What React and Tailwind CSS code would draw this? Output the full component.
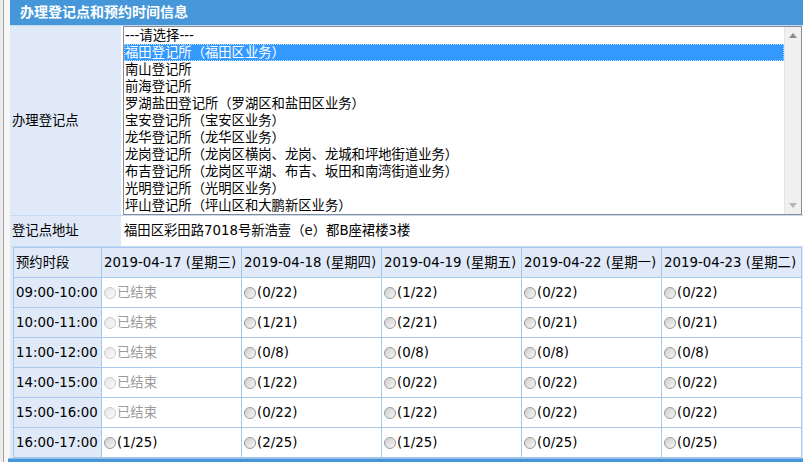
const options = [
  "---请选择---",
  "福田登记所（福田区业务）",
  "南山登记所",
  "前海登记所",
  "罗湖盐田登记所（罗湖区和盐田区业务）",
  "宝安登记所（宝安区业务）",
  "龙华登记所（龙华区业务）",
  "龙岗登记所（龙岗区横岗、龙岗、龙城和坪地街道业务）",
  "布吉登记所（龙岗区平湖、布吉、坂田和南湾街道业务）",
  "光明登记所（光明区业务）",
  "坪山登记所（坪山区和大鹏新区业务）",
];

const dates = [
  "2019-04-17 (星期三)",
  "2019-04-18 (星期四)",
  "2019-04-19 (星期五)",
  "2019-04-22 (星期一)",
  "2019-04-23 (星期二)",
];

const slots = [
  { time: "09:00-10:00", cells: [null, "(0/22)", "(1/22)", "(0/22)", "(0/22)"] },
  { time: "10:00-11:00", cells: [null, "(1/21)", "(2/21)", "(0/21)", "(0/21)"] },
  { time: "11:00-12:00", cells: [null, "(0/8)", "(0/8)", "(0/8)", "(0/8)"] },
  { time: "14:00-15:00", cells: [null, "(1/22)", "(0/22)", "(0/22)", "(0/22)"] },
  { time: "15:00-16:00", cells: [null, "(0/22)", "(1/22)", "(0/22)", "(0/22)"] },
  { time: "16:00-17:00", cells: ["(1/25)", "(2/25)", "(1/25)", "(0/25)", "(0/25)"] },
];

function Radio({ disabled }) {
  return (
    <span
      className={
        disabled
          ? "inline-block w-[12px] h-[12px] rounded-full border border-[#cacaca] bg-gradient-to-br from-[#e6e6e6] to-[#fafafa] shrink-0"
          : "inline-block w-[12px] h-[12px] rounded-full border border-[#9a9a9a] bg-gradient-to-br from-[#cfcfcf] to-[#f7f7f7] shrink-0"
      }
    />
  );
}

export default function App() {
  return (
    <div className="flex w-[811px] h-[462px] overflow-hidden bg-white text-[13.33px] text-black font-['DejaVu_Sans','Noto_Sans_CJK_SC',sans-serif]">
      {/* left window edge */}
      <div className="w-[3px] bg-[#ececec]" />
      <div className="w-px bg-[#a3a3a3]" />
      <div className="w-[6px] bg-[#f7f7f7]" />

      <div className="w-[793px] flex flex-col">
        {/* Title */}
        <div className="h-[25px] bg-[#4597d9] text-white text-[14px] font-bold pl-[10px] flex items-center">
          办理登记点和预约时间信息
        </div>
        <div className="h-px bg-[#c6dbf1]" />

        {/* 办理登记点 */}
        <div className="flex h-[189px]">
          <div className="w-[111px] bg-[#dfe9f7] pl-[2px] flex items-center">办理登记点</div>
          <div className="w-[2px] bg-white" />
          <div className="w-[679px] border border-[#878b92] flex">
            <div className="flex-1 flex flex-col">
              {options.map((o, i) => (
                <div
                  key={o}
                  className={
                    i === 1
                      ? "h-[17px] leading-[17px] pl-px bg-[#3399ff] text-white outline outline-1 outline-dotted outline-[#bcdcff] -outline-offset-1 whitespace-nowrap"
                      : "h-[17px] leading-[17px] pl-px whitespace-nowrap"
                  }
                >
                  {o}
                </div>
              ))}
            </div>
            <div className="w-[17px] bg-[#f0f0f0] border-l border-[#e4e4e4] flex flex-col items-center justify-between py-[6px]">
              <svg width="8" height="5" viewBox="0 0 8 5">
                <path d="M0 5 L4 0 L8 5 Z" fill="#8c8c8c" />
              </svg>
              <svg width="8" height="5" viewBox="0 0 8 5">
                <path d="M0 0 L4 5 L8 0 Z" fill="#b5b5b5" />
              </svg>
            </div>
          </div>
          <div className="w-px bg-white" />
        </div>
        <div className="h-px bg-[#c6dbf1]" />

        {/* 登记点地址 */}
        <div className="flex h-[30px]">
          <div className="w-[111px] bg-[#dfe9f7] pl-[2px] flex items-center">登记点地址</div>
          <div className="flex-1 pl-[3px] flex items-center whitespace-nowrap">
            福田区彩田路7018号新浩壹（e）都B座裙楼3楼
          </div>
        </div>
        <div className="h-px bg-[#c6dbf1]" />

        {/* 预约时段 */}
        <div className="h-[211px] bg-[#dfe9f7] pl-[3px]">
          <div className="w-[789px] bg-white border-l border-t border-[#a8c8ee] grid grid-cols-[88px_140px_140px_140px_140px_140px]">
            <div className="h-[30px] bg-[#dfe9f7] border-r border-b border-[#a8c8ee] pl-[2px] flex items-center">
              预约时段
            </div>
            {dates.map((d) => (
              <div
                key={d}
                className="h-[30px] bg-[#dfe9f7] border-r border-b border-[#a8c8ee] pl-[2px] flex items-center whitespace-nowrap"
              >
                {d}
              </div>
            ))}
            {slots.map((s) => (
              <div key={s.time} className="contents">
                <div className="h-[30px] bg-[#dfe9f7] border-r border-b border-[#a8c8ee] pl-[2px] flex items-center">
                  {s.time}
                </div>
                {s.cells.map((c, i) => (
                  <div
                    key={i}
                    className="h-[30px] border-r border-b border-[#a8c8ee] pl-[2px] flex items-center gap-px"
                  >
                    <Radio disabled={c === null} />
                    {c === null ? (
                      <span className="text-[#9c9c9c]">已结束</span>
                    ) : (
                      <span>{c}</span>
                    )}
                  </div>
                ))}
              </div>
            ))}
          </div>
        </div>

        {/* next panel header */}
        <div className="-ml-[2px] h-px bg-[#8fbde8]" />
        <div className="-ml-[2px] flex-1 bg-[#4597d9]" />
      </div>
    </div>
  );
}
